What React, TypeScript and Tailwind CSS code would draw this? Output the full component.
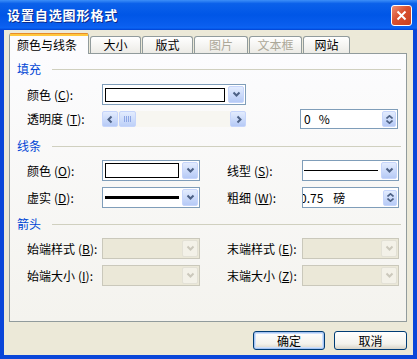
import React from 'react';

type Dir = 'down' | 'up' | 'left' | 'right';

function Chev({ dir, color = '#4D6185', size = 9 }: { dir: Dir; color?: string; size?: number }) {
  const paths: Record<Dir, string> = {
    down: 'M1.5 2.5 L4.5 5.5 L7.5 2.5',
    up: 'M1.5 6 L4.5 3 L7.5 6',
    left: 'M5.5 1.5 L2.5 4.5 L5.5 7.5',
    right: 'M3.5 1.5 L6.5 4.5 L3.5 7.5',
  };
  return (
    <svg width={size} height={size} viewBox="0 0 9 9" className="block">
      <path d={paths[dir]} fill="none" stroke={color} strokeWidth="2" />
    </svg>
  );
}

function DropBtn({ disabled }: { disabled?: boolean }) {
  return (
    <div
      className={`ml-[2px] flex w-[16px] items-center justify-center rounded-[2px] border ${
        disabled
          ? 'border-[#E3E1D6] bg-[#F3F1E8]'
          : 'border-[#C6D5FB] bg-[linear-gradient(to_bottom,#E3ECFE,#B6CAF6)]'
      }`}
    >
      <Chev dir="down" color={disabled ? '#CBC8BC' : '#4D6185'} />
    </div>
  );
}

function Combo({
  className = '',
  disabled,
  children,
}: {
  className?: string;
  disabled?: boolean;
  children?: React.ReactNode;
}) {
  return (
    <div
      className={`flex h-[21px] border p-[1px] ${
        disabled ? 'border-[#CAC8BB] bg-[#EBE8D8]' : 'border-[#7F9DB9] bg-white'
      } ${className}`}
    >
      <div className="flex flex-1 items-center">{children}</div>
      <DropBtn disabled={disabled} />
    </div>
  );
}

function SpinEdit({
  className = '',
  clip,
  children,
}: {
  className?: string;
  clip?: boolean;
  children?: React.ReactNode;
}) {
  return (
    <div className={`flex h-[20px] items-center border border-[#7F9DB9] bg-white ${className}`}>
      <div
        className={`flex flex-1 items-center whitespace-nowrap text-[12px] leading-[16px] ${
          clip ? 'overflow-hidden' : ''
        }`}
      >
        {children}
      </div>
      <div className="mr-[1px] flex h-[16px] w-[14px] flex-col items-center justify-center gap-[1px] rounded-[2px] border border-[#C6D5FB] bg-[linear-gradient(to_bottom,#E3ECFE,#B6CAF6)]">
        <svg width="7" height="4" viewBox="0 0 7 4" className="block">
          <path d="M0.5 3.5 L3.5 0.8 L6.5 3.5" fill="none" stroke="#4D6185" strokeWidth="1.6" />
        </svg>
        <svg width="7" height="4" viewBox="0 0 7 4" className="block">
          <path d="M0.5 0.5 L3.5 3.2 L6.5 0.5" fill="none" stroke="#4D6185" strokeWidth="1.6" />
        </svg>
      </div>
    </div>
  );
}

function ScrollBar({ className = '' }: { className?: string }) {
  return (
    <div className={`flex h-[16px] bg-[#F7F6F1] ${className}`}>
      <div className="flex w-[16px] items-center justify-center rounded-[2px] border border-[#C6D5FB] bg-[linear-gradient(to_bottom,#E3ECFE,#B6CAF6)]">
        <Chev dir="left" />
      </div>
      <div className="ml-[1px] flex w-[17px] items-center justify-center gap-[1px] rounded-[2px] border border-[#C6D5FB] bg-[linear-gradient(to_bottom,#E3ECFE,#BDD0F8)]">
        <div className="h-[6px] w-[1px] bg-[#8DA6E4]" />
        <div className="h-[6px] w-[1px] bg-[#8DA6E4]" />
        <div className="h-[6px] w-[1px] bg-[#8DA6E4]" />
        <div className="h-[6px] w-[1px] bg-[#8DA6E4]" />
      </div>
      <div className="flex-1" />
      <div className="flex w-[16px] items-center justify-center rounded-[2px] border border-[#C6D5FB] bg-[linear-gradient(to_bottom,#E3ECFE,#B6CAF6)]">
        <Chev dir="right" />
      </div>
    </div>
  );
}

function Label({ text, k, className = '' }: { text: string; k: string; className?: string }) {
  return (
    <div className={`w-[75px] shrink-0 whitespace-nowrap text-[12px] leading-[14px] text-black ${className}`}>
      {text}
      <span className="ml-[3px]">
        (<u className="underline-offset-1">{k}</u>):
      </span>
    </div>
  );
}

function Heading({ text }: { text: string }) {
  return (
    <div className="flex h-[16px] items-center pl-[7px]">
      <span className="text-[12px] leading-[14px] text-[#0046D5]">{text}</span>
      <div className="ml-[11px] mr-[5px] h-[1px] flex-1 bg-[#D0D0BF]" />
    </div>
  );
}

function Tab({ text, className = '', disabled }: { text: string; className?: string; disabled?: boolean }) {
  return (
    <div
      className={`flex h-[17px] items-center justify-center rounded-t-[3px] border border-b-0 border-[#919B9C] bg-[linear-gradient(to_bottom,#FFFFFF,#ECEBE6)] text-[12px] leading-[14px] ${
        disabled ? 'text-[#ACA899]' : 'text-black'
      } ${className}`}
    >
      {text}
    </div>
  );
}

export default function App() {
  return (
    <div className="flex h-[359px] w-[417px] flex-col bg-[#0A46D9] font-['Noto_Sans_CJK_SC',sans-serif]">
      {/* Title bar */}
      <div className="flex h-[30px] shrink-0 items-center bg-[linear-gradient(to_bottom,#3D8FF8_0%,#0B61EA_12%,#0056E7_50%,#0A5EEE_85%,#0B64F4_93%,#0042D3_100%)] pl-[7px] pr-[5px]">
        <span className="text-[13px] font-bold leading-[16px] tracking-[0.9px] text-white [text-shadow:1px_1px_0_#0B2A8C]">
          设置自选图形格式
        </span>
        <div className="flex-1" />
        <div className="flex h-[21px] w-[21px] items-center justify-center rounded-[3px] border border-white bg-[linear-gradient(135deg,#EE8F74,#D9502F_45%,#C8401F)]">
          <svg width="11" height="11" viewBox="0 0 11 11" className="block">
            <path d="M1.5 1.5 L9.5 9.5 M9.5 1.5 L1.5 9.5" stroke="#FFFFFF" strokeWidth="2" />
          </svg>
        </div>
      </div>

      {/* Client area */}
      <div className="mx-[4px] mb-[4px] flex flex-1 flex-col bg-[#ECE9D8]">
        {/* Tabs */}
        <div className="mt-[3px] flex h-[20px] items-end gap-[1px] pl-[5px]">
          <div className="relative z-10 -mb-[1px] flex h-[21px] w-[80px] flex-col rounded-t-[3px] border-x border-[#919B9C] bg-[#FCFCFE]">
            <div className="h-[1px] rounded-t-[3px] bg-[#E68B2C]" />
            <div className="h-[2px] bg-[#FFC73C]" />
            <div className="flex flex-1 items-center pl-[7px] text-[12px] leading-[14px] text-black">颜色与线条</div>
          </div>
          <Tab text="大小" className="w-[51px]" />
          <Tab text="版式" className="w-[51px]" />
          <Tab text="图片" className="w-[54px]" disabled />
          <Tab text="文本框" className="w-[53px]" disabled />
          <Tab text="网站" className="w-[47px]" />
        </div>

        {/* Panel */}
        <div className="ml-[5px] flex h-[269px] w-[398px] flex-col border border-[#919B9C] bg-[linear-gradient(to_bottom,#FCFCFE,#F4F3EE)] pt-[7px]">
          <Heading text="填充" />
          <div className="mt-[7px] flex h-[21px] items-center pl-[17px]">
            <Label text="颜色" k="C" />
            <Combo className="w-[144px]">
              <div className="ml-[1px] mr-[1px] h-[14px] flex-1 border border-black bg-white" />
            </Combo>
          </div>
          <div className="mt-[4px] flex h-[20px] items-center pl-[17px]">
            <Label text="透明度" k="T" />
            <ScrollBar className="w-[144px]" />
            <div className="w-[54px]" />
            <SpinEdit className="w-[98px]">
              <span className="ml-[3px] mr-[8px]">0</span>
              <span>%</span>
            </SpinEdit>
          </div>

          <div className="mt-[9px]">
            <Heading text="线条" />
          </div>
          <div className="mt-[6px] flex h-[21px] items-center pl-[17px]">
            <Label text="颜色" k="O" />
            <Combo className="w-[98px]">
              <div className="ml-[1px] mr-[1px] h-[15px] flex-1 border border-black bg-white" />
            </Combo>
            <div className="w-[27px]" />
            <Label text="线型" k="S" />
            <Combo className="w-[97px]">
              <div className="ml-[0px] mr-[1px] h-[1px] flex-1 bg-black" />
            </Combo>
          </div>
          <div className="mt-[6px] flex h-[21px] items-center pl-[17px]">
            <Label text="虚实" k="D" />
            <Combo className="w-[98px]">
              <div className="ml-[1px] mr-[1px] h-[3px] flex-1 bg-black" />
            </Combo>
            <div className="w-[27px]" />
            <Label text="粗细" k="W" />
            <SpinEdit className="h-[21px] w-[97px]" clip>
              <span className="-ml-[3px] mr-[10px]">0.75</span>
              <span>磅</span>
            </SpinEdit>
          </div>

          <div className="mt-[8px]">
            <Heading text="箭头" />
          </div>
          <div className="mt-[6px] flex h-[21px] items-center pl-[17px]">
            <Label text="始端样式" k="B" />
            <Combo className="w-[98px]" disabled />
            <div className="w-[27px]" />
            <Label text="末端样式" k="E" />
            <Combo className="w-[97px]" disabled />
          </div>
          <div className="mt-[6px] flex h-[21px] items-center pl-[17px]">
            <Label text="始端大小" k="I" />
            <Combo className="w-[98px]" disabled />
            <div className="w-[27px]" />
            <Label text="末端大小" k="Z" />
            <Combo className="w-[97px]" disabled />
          </div>
        </div>

        {/* Buttons */}
        <div className="mt-[9px] flex justify-end gap-[9px] pr-[6px]">
          <div className="flex h-[19px] w-[72px] items-center justify-center rounded-[3px] border border-[#003C74] bg-[linear-gradient(to_bottom,#FFFFFF,#F3F2EC_70%,#D8D4C8)] shadow-[inset_0_0_0_1px_#A6C4F2,inset_0_0_0_2px_#CEE0FB]">
            <span className="text-[12px] leading-[14px] text-black">确定</span>
          </div>
          <div className="flex h-[19px] w-[73px] items-center justify-center rounded-[3px] border border-[#003C74] bg-[linear-gradient(to_bottom,#FFFFFF,#F3F2EC_70%,#D8D4C8)]">
            <span className="text-[12px] leading-[14px] text-black">取消</span>
          </div>
        </div>
      </div>
    </div>
  );
}
